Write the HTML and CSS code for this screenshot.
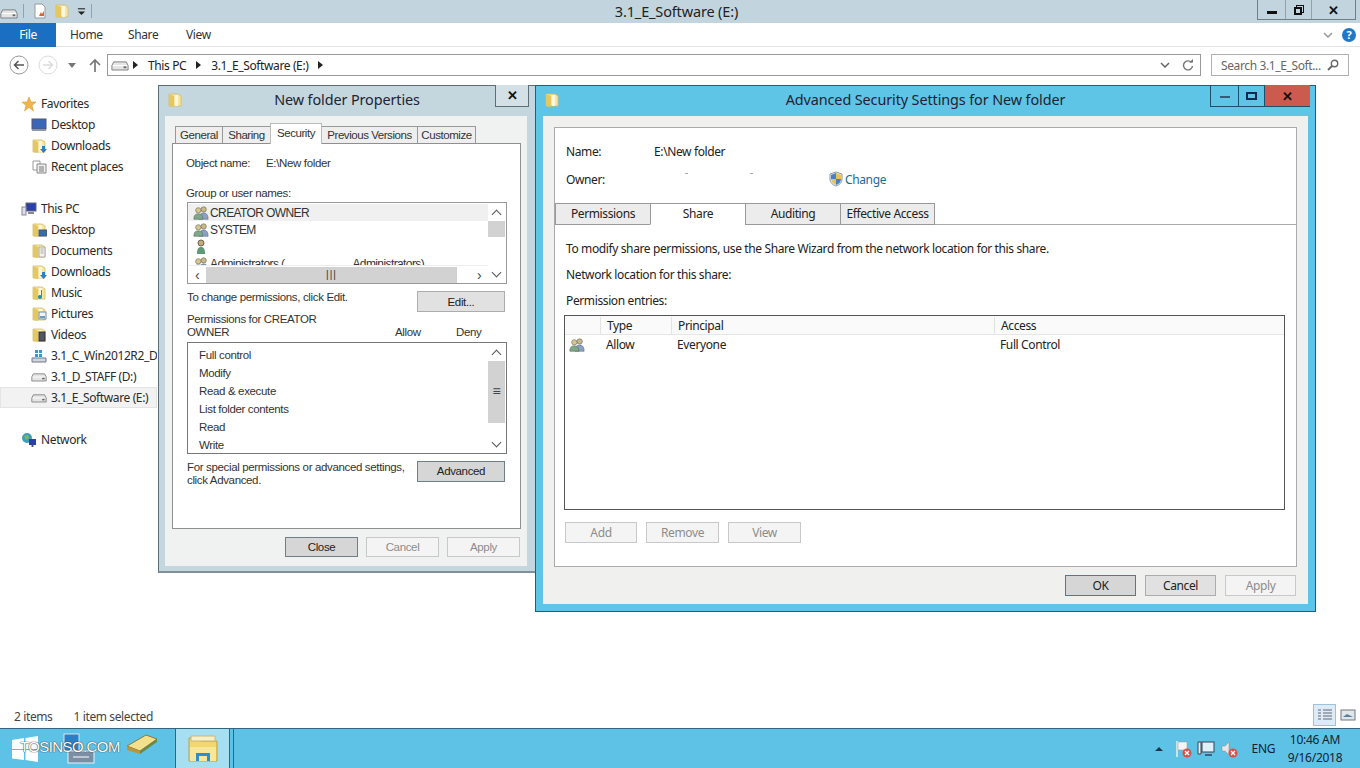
FILE: index.html
```html
<!DOCTYPE html>
<html lang="en">
<head>
  <meta charset="UTF-8" />
  <title>3.1_E_Software (E:)</title>
  <link rel="stylesheet" href="styles.css">
</head>
<body>
  <!-- shared icons -->
  <svg class="defs" width="0" height="0">
    <symbol id="tallfolder" viewBox="0 0 16 16">
      <path d="M2 2h9l3 2v10H2z" fill="#f6e6a0" stroke="#d2bb6a" stroke-width=".8"/>
      <path d="M2 2l5 2v11l-5-1z" fill="#e4c75e"/>
      <path d="M8 3h3v11H8z" fill="#fbf6dc"/>
    </symbol>
    <symbol id="drive" viewBox="0 0 20 12">
      <path d="M3 2h14l2 4v5H1V6z" fill="#e4e4e4" stroke="#777"/>
      <path d="M2 6h16" stroke="#fff"/>
      <rect x="14" y="7" width="3" height="2" fill="#666"/>
    </symbol>
    <symbol id="users" viewBox="0 0 18 16">
      <circle cx="12" cy="4" r="3" fill="#c9b88a" stroke="#6b6b55" stroke-width=".7"/>
      <path d="M7 15c0-5 2-7 5-7s5 2 5 7z" fill="#8aa0c4" stroke="#5f6f8c" stroke-width=".7"/>
      <circle cx="6" cy="5" r="3" fill="#d8c68e" stroke="#6b6b55" stroke-width=".7"/>
      <path d="M1 15c0-5 2-6 5-6s5 1 5 6z" fill="#7fa88a" stroke="#55705c" stroke-width=".7"/>
    </symbol>
    <symbol id="redx" viewBox="0 0 10 10">
      <circle cx="5" cy="5" r="4.500" fill="#d8504a"/>
      <path d="M3 3l4 4M7 3l-4 4" stroke="#fff" stroke-width="1.300"/>
    </symbol>
  </svg>

  <div class="explorer">
    <header class="titlebar">
      <div class="qat">
        <svg class="ico-drive-sm qat-drive"><use href="#drive"/></svg>
        <span class="qat-sep"></span>
        <svg class="ico-16" viewBox="0 0 16 16">
          <path d="M3 1h7l3 3v11H3z" fill="#fff" stroke="#999"/>
          <path d="M7 13l2-4 1 2 2-3v5z" fill="#d8653a"/>
        </svg>
        <svg class="ico-16"><use href="#tallfolder"/></svg>
        <svg class="ico-qat-menu" viewBox="0 0 10 10">
          <path d="M1 2h8" stroke="#222" stroke-width="1.200"/>
          <path d="M1 5h8L5 9z" fill="#222"/>
        </svg>
        <span class="qat-sep"></span>
      </div>
      <div class="title-text">3.1_E_Software (E:)</div>
      <div class="winbtns">
        <span class="winbtn min"><i class="glyph-min"></i></span>
        <span class="winbtn rest"><i class="glyph-rest"></i></span>
        <span class="winbtn close">✕</span>
      </div>
    </header>

    <nav class="ribbon">
      <span class="tab-file">File</span>
      <span class="rtab">Home</span>
      <span class="rtab">Share</span>
      <span class="rtab">View</span>
      <span class="ribbon-right">
        <svg class="ico-chev" viewBox="0 0 10 6"><path d="M1 1l4 4 4-4" fill="none" stroke="#999" stroke-width="1.500"/></svg>
        <span class="help">?</span>
      </span>
    </nav>

    <div class="addressrow">
      <span class="navbtn back"><svg viewBox="0 0 20 20"><circle cx="10" cy="10" r="9" fill="#fff" stroke="#999"/><path d="M15 10H6M9.500 6L5.500 10l4 4" fill="none" stroke="#555" stroke-width="1.500"/></svg></span>
      <span class="navbtn forward"><svg viewBox="0 0 20 20"><circle cx="10" cy="10" r="9" fill="#fff" stroke="#ddd"/><path d="M5 10h9M10.500 6l4 4-4 4" fill="none" stroke="#ddd" stroke-width="1.500"/></svg></span>
      <span class="navcaret"></span>
      <span class="navup"><svg viewBox="0 0 12 14"><path d="M6 14V2M1 7l5-5 5 5" fill="none" stroke="#777" stroke-width="1.700"/></svg></span>
      <div class="addressbar">
        <svg class="ico-drive-sm"><use href="#drive"/></svg>
        <span class="crumb-arrow first"></span><span>This PC</span>
        <span class="crumb-arrow"></span><span>3.1_E_Software (E:)</span>
        <span class="crumb-arrow"></span>
        <span class="address-end">
          <svg class="ico-chev" viewBox="0 0 10 6"><path d="M1 1l4 4 4-4" fill="none" stroke="#666" stroke-width="1.500"/></svg>
          <svg class="ico-refresh" viewBox="0 0 12 12"><path d="M9.500 3.500A4.500 4.500 0 1 0 10.500 7" fill="none" stroke="#777" stroke-width="1.400"/><path d="M7 3.500h4V0z" fill="#777"/></svg>
        </span>
      </div>
      <div class="searchbox">
        <span>Search 3.1_E_Soft...</span>
        <svg class="ico-search" viewBox="0 0 12 12"><circle cx="7.500" cy="4.500" r="3.200" fill="none" stroke="#666" stroke-width="1.400"/><path d="M5 7l-4 4" stroke="#666" stroke-width="1.800"/></svg>
      </div>
    </div>

    <div class="content">
      <aside class="sidebar">
        <ul class="tree">
          <li class="head"><svg class="ico-16" viewBox="0 0 16 16"><path d="M8 1l2 5h5l-4 3.500L12.500 15 8 11.500 3.500 15 5 9.500 1 6h5z" fill="#f0b54a" stroke="#d89a3a" stroke-width=".6"/></svg>Favorites</li>
          <li><svg class="ico-16" viewBox="0 0 16 16"><rect x="1" y="2" width="14" height="10" fill="#3a66b8" stroke="#557"/><path d="M1 12h14v2H1z" fill="#8d99a8"/></svg>Desktop</li>
          <li><svg class="ico-16" viewBox="0 0 16 16"><use href="#tallfolder" width="16" height="16"/><path d="M11 8h3v3h2l-3.500 4L9 11h2z" fill="#2b7fc8"/></svg>Downloads</li>
          <li><svg class="ico-16" viewBox="0 0 16 16"><path d="M2 2h7v9H2z" fill="#fff" stroke="#999"/><path d="M6 5h9v9H6z" fill="#eee" stroke="#888"/><path d="M8 8h5M8 10h5M8 12h5" stroke="#777"/></svg>Recent places</li>
          <li class="gap head"><svg class="ico-16" viewBox="0 0 16 16"><rect x="5" y="2" width="10" height="8" fill="#2b3fa8" stroke="#667"/><rect x="1" y="6" width="4" height="8" fill="#dde" stroke="#889"/><path d="M7 12h6" stroke="#889" stroke-width="2"/></svg>This PC</li>
          <li><svg class="ico-16" viewBox="0 0 16 16"><use href="#tallfolder" width="16" height="16"/><rect x="8" y="8" width="8" height="6" fill="#2f6fb0" stroke="#556"/></svg>Desktop</li>
          <li><svg class="ico-16" viewBox="0 0 16 16"><use href="#tallfolder" width="16" height="16"/><path d="M8 4h6v10H8z" fill="#f4f2ea" stroke="#aaa"/><path d="M9.500 6h3M9.500 8h3M9.500 10h3" stroke="#aaa"/></svg>Documents</li>
          <li><svg class="ico-16" viewBox="0 0 16 16"><use href="#tallfolder" width="16" height="16"/><path d="M11 8h3v3h2l-3.500 4L9 11h2z" fill="#2b7fc8"/></svg>Downloads</li>
          <li><svg class="ico-16" viewBox="0 0 16 16"><use href="#tallfolder" width="16" height="16"/><path d="M11 5v7a2 2 0 1 1-1-1.700V5z" fill="#2b8fa8"/></svg>Music</li>
          <li><svg class="ico-16" viewBox="0 0 16 16"><use href="#tallfolder" width="16" height="16"/><rect x="8" y="6" width="7" height="7" fill="#eef4f8" stroke="#789"/><path d="M9 11h5" stroke="#6a9ac0" stroke-width="2"/></svg>Pictures</li>
          <li><svg class="ico-16" viewBox="0 0 16 16"><use href="#tallfolder" width="16" height="16"/><rect x="8" y="5" width="6" height="9" fill="#556" stroke="#333"/></svg>Videos</li>
          <li><svg class="ico-16" viewBox="0 0 16 16"><path d="M4 2h3v3H4zM8 2h3v3H8zM4 6h3v3H4zM8 6h3v3H8z" fill="#2f9bd0"/><path d="M1 10h14v4H1z" fill="#cfd6dc" stroke="#778"/></svg>3.1_C_Win2012R2_DC</li>
          <li><svg class="ico-16"><use href="#drive"/></svg>3.1_D_STAFF (D:)</li>
          <li class="selected"><svg class="ico-16"><use href="#drive"/></svg>3.1_E_Software (E:)</li>
          <li class="gap head"><svg class="ico-16" viewBox="0 0 16 16"><circle cx="6" cy="6" r="5" fill="#3f9fb8"/><path d="M3 4l4-1 1 3-3 2z" fill="#7fb85a"/><rect x="8" y="7" width="7" height="6" fill="#2b3fa8"/><path d="M11.500 13v2" stroke="#556" stroke-width="2"/></svg>Network</li>
        </ul>
      </aside>
    </div>

    <footer class="statusbar">
      <span class="status-a">2 items</span>
      <span>1 item selected</span>
      <span class="views">
        <span class="view on"><svg viewBox="0 0 16 14"><path d="M1 2h3M6 2h9M1 5h3M6 5h9M1 8h3M6 8h9M1 11h3M6 11h9" stroke="#667"/></svg></span>
        <span class="view"><svg viewBox="0 0 16 14"><rect x="1" y="2" width="14" height="10" fill="#dfe6ec" stroke="#777"/><path d="M3 9l4-3 6 3z" fill="#5f7f96"/></svg></span>
      </span>
    </footer>
  </div>

  <!-- properties dialog -->
  <section class="dlg props">
    <div class="dlg-title">
      <svg class="ico-16"><use href="#tallfolder"/></svg>
      <span class="dlg-title-text">New folder Properties</span>
      <span class="props-close">✕</span>
    </div>
    <div class="props-body">
      <div class="props-tabs">
        <span class="ptab">General</span>
        <span class="ptab">Sharing</span>
        <span class="ptab on">Security</span>
        <span class="ptab">Previous Versions</span>
        <span class="ptab">Customize</span>
      </div>
      <div class="props-panel">
        <div class="objname"><span class="objlabel">Object name:</span><span>E:\New folder</span></div>
        <div class="grouplabel">Group or user names:</div>
        <div class="listbox groups">
          <div class="listrows">
            <div class="urow hl"><svg class="ico-16"><use href="#users"/></svg>CREATOR OWNER</div>
            <div class="urow"><svg class="ico-16"><use href="#users"/></svg>SYSTEM</div>
            <div class="urow"><svg class="ico-16" viewBox="0 0 16 16"><circle cx="8" cy="4" r="3" fill="#c9a878" stroke="#665"/><path d="M4 15c0-5 1-7 4-7s4 2 4 7z" fill="#5f9a78"/></svg></div>
            <div class="urow"><svg class="ico-16"><use href="#users"/></svg>Administrators (<span class="blank"></span>Administrators)</div>
            <div class="hscroll">
              <span class="sb-arrow">‹</span>
              <span class="hthumb">|||</span>
              <span class="sb-arrow">›</span>
            </div>
          </div>
          <div class="vscroll">
            <span class="sb-arrow up"></span>
            <span class="vthumb small"></span>
            <span class="vspace"></span>
            <span class="sb-arrow down"></span>
          </div>
        </div>
        <div class="editrow">
          <span>To change permissions, click Edit.</span>
          <span class="btn edit">Edit...</span>
        </div>
        <div class="permhead">
          <span class="permfor">Permissions for CREATOR<br>OWNER</span>
          <span class="allow">Allow</span>
          <span class="deny">Deny</span>
        </div>
        <div class="listbox perms">
          <div class="permrows">
            <div>Full control</div>
            <div>Modify</div>
            <div>Read &amp; execute</div>
            <div>List folder contents</div>
            <div>Read</div>
            <div>Write</div>
          </div>
          <div class="vscroll">
            <span class="sb-arrow up"></span>
            <span class="vthumb big">≡</span>
            <span class="vspace"></span>
            <span class="sb-arrow down"></span>
          </div>
        </div>
        <div class="advrow">
          <span>For special permissions or advanced settings,<br>click Advanced.</span>
          <span class="btn edit focus">Advanced</span>
        </div>
      </div>
      <div class="props-foot">
        <span class="btn pbtn focus">Close</span>
        <span class="btn pbtn off">Cancel</span>
        <span class="btn pbtn off">Apply</span>
      </div>
    </div>
  </section>

  <!-- advanced security dialog -->
  <section class="dlg adv">
    <div class="dlg-title">
      <svg class="ico-16"><use href="#tallfolder"/></svg>
      <span class="dlg-title-text">Advanced Security Settings for New folder</span>
      <div class="adv-ctrls">
        <span class="ctrl c-min"><i class="adv-min"></i></span>
        <span class="ctrl c-max"><i class="adv-max"></i></span>
        <span class="ctrl red">✕</span>
      </div>
    </div>
    <div class="adv-body">
      <div class="adv-panel">
        <div class="kv"><span class="k">Name:</span><span>E:\New folder</span></div>
        <div class="kv owner">
          <span class="k">Owner:</span>
          <span class="owner-blank"></span>
          <svg class="ico-shield" viewBox="0 0 16 16"><path d="M8 1l6 2v5c0 4-3 6-6 7-3-1-6-3-6-7V3z" fill="#e8eef2" stroke="#8a9aa8"/><path d="M8 2v6H3V4zM8 8h5c0 3-2 5-5 6z" fill="#4a7fc0"/><path d="M8 2l5 2v4H8zM8 8v6c-2-1-5-3-5-6z" fill="#e8c550"/></svg>
          <span class="link">Change</span>
        </div>
        <div class="adv-tabs">
          <span class="atab">Permissions</span>
          <span class="atab on">Share</span>
          <span class="atab">Auditing</span>
          <span class="atab">Effective Access</span>
        </div>
        <div class="adv-tabbody">
          <p class="para first">To modify share permissions, use the Share Wizard from the network location for this share.</p>
          <p class="para">Network location for this share:</p>
          <p class="para">Permission entries:</p>
          <div class="entries">
            <div class="entries-head">
              <span class="c-icon"></span>
              <span class="c-type">Type</span>
              <span class="c-principal">Principal</span>
              <span class="c-access">Access</span>
            </div>
            <div class="entries-row">
              <span class="c-icon"><svg class="ico-16"><use href="#users"/></svg></span>
              <span class="c-type">Allow</span>
              <span class="c-principal">Everyone</span>
              <span class="c-access">Full Control</span>
            </div>
          </div>
          <div class="entry-btns">
            <span class="btn abtn off">Add</span>
            <span class="btn abtn off">Remove</span>
            <span class="btn abtn off">View</span>
          </div>
        </div>
      </div>
      <div class="adv-foot">
        <span class="btn fbtn focus">OK</span>
        <span class="btn fbtn">Cancel</span>
        <span class="btn fbtn off">Apply</span>
      </div>
    </div>
  </section>

  <!-- taskbar -->
  <div class="taskbar">
    <svg class="winlogo" viewBox="0 0 26 26"><path d="M0 4l12-2v11H0zM13.500 2L26 0v13H13.500zM0 14h12v10L0 22.500zM13.500 14H26v12l-12.500-2z" fill="#fff"/></svg>
    <svg class="ql-server" viewBox="0 0 32 32"><rect x="1" y="1" width="15" height="17" fill="#2d7fc4" stroke="#cfe6f4"/><rect x="5" y="18" width="26" height="12" fill="#7a8fa4" stroke="#e8f2f8"/><path d="M10 24h16" stroke="#fff"/></svg>
    <svg class="ql-book" viewBox="0 0 32 22"><path d="M1 13L20 2l11 4-17 12z" fill="#f2e08c" stroke="#8a7a3a"/><path d="M1 13l13 5v3L1 17z" fill="#b8973a"/><path d="M14 18l17-12v3L14 21z" fill="#6a8a4a"/></svg>
    <span class="watermark">TOSINSO.COM</span>
    <span class="tb-app">
      <svg class="ico-explorer" viewBox="0 0 32 32">
        <path d="M2 5h10l2 3h16v20H2z" fill="#f2d76e" stroke="#b9a04a"/>
        <path d="M4 3h24v5H4z" fill="#f7efc8" stroke="#c9b878"/>
        <path d="M3 14h26v14H3z" fill="#f8e79a"/>
        <path d="M9 28v-8h14v8h-3v-5h-8v5z" fill="#2f8fc4"/>
      </svg>
    </span>
    <span class="tb-sliver"></span>
    <div class="tray">
      <span class="tray-up"></span>
      <span class="tray-ico"><svg viewBox="0 0 18 18"><path d="M3 1v16" stroke="#eee" stroke-width="1.500"/><path d="M4 2h9v8H4z" fill="#f4f4f4" stroke="#999" stroke-width=".5"/><use href="#redx" x="8" y="8" width="10" height="10"/></svg></span>
      <span class="tray-ico"><svg viewBox="0 0 18 18"><rect x="5" y="2" width="12" height="10" fill="#dff0f8" stroke="#345"/><path d="M1 2h3v12H1z" fill="#dff0f8" stroke="#345"/><path d="M8 15h7" stroke="#345" stroke-width="1.500"/></svg></span>
      <span class="tray-ico"><svg viewBox="0 0 18 18"><path d="M2 6h3l4-4v13l-4-4H2z" fill="#e6e6e6" stroke="#888" stroke-width=".5"/><use href="#redx" x="8" y="8" width="10" height="10"/></svg></span>
      <span class="tray-lang">ENG</span>
      <span class="clock">10:46 AM<br>9/16/2018</span>
    </div>
  </div>
</body>
</html>
```

FILE: styles.css
```css
* {box-sizing: border-box;}
html, body {margin: 0; padding: 0;}
body {width: 1360px; height: 768px; overflow: hidden; position: relative; background: #fff; color: #222; font-family: "Noto Sans", sans-serif; font-size: 12px; letter-spacing: -.38px;}
svg {display: block; flex: none;}
.defs {position: absolute;}
.ico-16 {width: 16px; height: 16px;}
.ico-drive-sm {width: 18px; height: 11px;}

.explorer {height: 728px; display: flex; flex-direction: column;}

/* title bar */
.titlebar {height: 23px; background: #c2d5de; display: flex; position: relative;}
.qat {display: flex; align-items: center; height: 22px; width: 200px;}
.qat-drive {margin-top: 5px;}
.qat-sep {width: 1px; height: 14px; background: #8fa3ad; margin: 0 8px 0 5px;}
.qat .ico-16 + .ico-16 {margin-left: 6px;}
.ico-qat-menu {width: 9px; height: 9px; margin-left: 7px;}
.title-text {flex: 1; text-align: center; font-size: 14.500px; line-height: 23px; padding-right: 104px; letter-spacing: -.15px;}
.winbtns {display: flex; height: 20px; margin-right: 4px; border-left: 1px solid #6f8088; border-bottom: 1px solid #6f8088;}
.winbtn {display: flex; align-items: center; justify-content: center; border-right: 1px solid #8fa3ad; height: 19px;}
.winbtn.min {width: 28px;}
.winbtn.rest {width: 26px;}
.winbtn.close {width: 44px; font-size: 13px; font-weight: bold; color: #111; border-right: 1px solid #6f8088;}
.glyph-min {width: 10px; height: 3px; background: #111; margin-top: 5px;}
.glyph-rest {width: 8px; height: 8px; border: 2px solid #111; box-shadow: 2px -2px 0 -1px #c2d5de, 2px -2px 0 0 #111; margin: 2px 2px 0 0;}

/* ribbon */
.ribbon {height: 24px; display: flex; align-items: center; border-bottom: 1px solid #e4e4e4;}
.tab-file {width: 56px; height: 24px; background: #1b6fc2; color: #fff; text-align: center; line-height: 23px;}
.rtab {margin-left: 14px; width: 44px; color: #333;}
.ribbon-right {margin-left: auto; display: flex; align-items: center; gap: 9px; padding-right: 4px;}
.ico-chev {width: 10px; height: 6px;}
.help {width: 14px; height: 14px; border-radius: 50%; background: #2277c8; color: #fff; font-weight: bold; font-size: 11px; line-height: 14px; text-align: center;}

/* address row */
.addressrow {height: 37px; display: flex; align-items: center; position: relative; padding-left: 9px; padding-bottom: 1px;}
.navbtn {width: 20px; height: 20px;}
.navbtn.forward {margin-left: 9px;}
.navcaret {width: 0; height: 0; border: 4px solid transparent; border-top: 5px solid #777; border-bottom: 0; margin-left: 10px;}
.navup {width: 12px; height: 14px; margin-left: 13px;}
.addressbar {width: 1094px; height: 22px; margin-left: 6px; border: 1px solid #9a9a9a; display: flex; align-items: center; padding-left: 3px;}
.crumb-arrow {width: 0; height: 0; border: 4px solid transparent; border-left: 5px solid #222; border-right: 0; margin: 0 10px 0 10px;}
.crumb-arrow.first {margin-left: 4px;}
.address-end {margin-left: auto; display: flex; align-items: center; gap: 12px; padding-right: 6px;}
.ico-refresh {width: 12px; height: 12px;}
.searchbox {width: 138px; height: 22px; margin-left: 10px; border: 1px solid #b0b0b0; display: flex; align-items: center; justify-content: space-between; padding: 0 9px; color: #666;}
.ico-search {width: 12px; height: 12px;}

/* sidebar */
.content {flex: 1; display: flex; min-height: 0;}
.sidebar {width: 157px; overflow: hidden;}
.tree {list-style: none; margin: 9px 0 0; padding: 0;}
.tree li {height: 21px; display: flex; align-items: center; gap: 4px; padding-left: 30px; white-space: nowrap; border: 1px solid transparent; color: #2a2a2a;}
.tree li.head {padding-left: 20px;}
.tree li.gap {margin-top: 21px;}
.tree li.selected {background: #f2f2f2; border-color: #e4e4e4;}

/* status bar */
.statusbar {height: 24px; display: flex; align-items: center; padding-left: 14px; color: #444;}
.status-a {margin-right: 21px;}
.views {margin-left: auto; display: flex; margin-right: 1px; align-self: flex-start;}
.view {width: 23px; height: 22px; display: flex; align-items: center; justify-content: center;}
.view.on {background: #dcebf5; border: 1px solid #9cc3dc;}
.view svg {width: 16px; height: 14px;}

/* dialogs */
.dlg {position: absolute; top: 85px; display: flex; flex-direction: column;}
.dlg-title {height: 30px; display: flex; align-items: center; position: relative; padding: 0 0 2px 8px; flex: none;}
.dlg-title-text {position: absolute; left: 0; right: 0; top: 4px; text-align: center; font-family: "Noto Sans", sans-serif; font-size: 14.400px; letter-spacing: -.1px; color: #223;}

.props {left: 158px; width: 377px; height: 488px; background: #c4d6de; border: 1px solid #5e6e76; border-right: 0; border-bottom: 2px solid #7f9099; font-family: "Liberation Sans", sans-serif; font-size: 11.500px; letter-spacing: -.35px;}
.props-close {position: absolute; right: 6px; top: -1px; width: 34px; height: 22px; background: #d3e0e6; border: 1px solid #5e6e76; border-top: 0; font-weight: bold; font-size: 13px; line-height: 21px; text-align: center; color: #111;}
.props-body {width: 362px; margin-left: 6px; height: 450px; background: #eff2f1;}
.props-tabs {display: flex; align-items: flex-end; height: 27px; padding-left: 10px; letter-spacing: -.45px;}
.ptab {height: 17px; line-height: 16px; text-align: center; border: 1px solid #999; border-bottom: 0; background: #eee; margin-right: -1px; color: #333;}
.ptab:nth-child(1) {width: 48px;}
.ptab:nth-child(2) {width: 49px;}
.ptab:nth-child(4) {width: 97px;}
.ptab:nth-child(5) {width: 59px;}
.ptab.on {width: 52px; height: 21px; background: #fff; position: relative; margin-bottom: -1px; z-index: 1; line-height: 18px; border-color: #bbb;}
.props-panel {width: 349px; margin-left: 7px; height: 386px; background: #fff; border: 1px solid #8f8f8f; padding: 12px 13px 0 13px; color: #333;}
.objname {display: flex; height: 14px; line-height: 14px;}
.objlabel {width: 80px;}
.grouplabel {margin-top: 16px; line-height: 14px; height: 14px;}
.listbox {display: flex; width: 320px; margin-left: 1px; border: 1px solid #777; background: #fff;}
.groups {height: 82px; margin-top: 2px; border-color: #999; font-size: 12px; letter-spacing: -.6px;}
.listrows {flex: 1; min-width: 0; position: relative; overflow: hidden; padding: 1px 0 0 5px;}
.urow {height: 17px; display: flex; align-items: center; gap: 1px; white-space: nowrap;}
.urow.hl {background: #f0f0f0; margin-left: -5px; padding-left: 5px;}
.blank {width: 66px;}
.hscroll {position: absolute; left: 0; right: 0; bottom: 0; height: 18px; background: #fff; display: flex; align-items: center; border-top: 1px solid #eee;}
.hscroll .sb-arrow {width: 18px; text-align: center; font-size: 14px; line-height: 16px; color: #444;}
.hthumb {width: 251px; height: 16px; background: #d2d2d2; text-align: center; line-height: 15px; font-size: 10px; letter-spacing: 1px; color: #333;}
.hscroll .sb-arrow:last-child {margin-left: auto;}
.vscroll {width: 17px; display: flex; flex-direction: column; margin: 1px 1px 1px 0;}
.vscroll .sb-arrow {height: 17px; display: flex; align-items: center; justify-content: center;}
.sb-arrow.up::before, .sb-arrow.down::before {content: ""; width: 6px; height: 6px; border-left: 1px solid #555; border-top: 1px solid #555;}
.sb-arrow.up::before {transform: rotate(45deg); margin-top: 3px;}
.sb-arrow.down::before {transform: rotate(225deg); margin-bottom: 3px;}
.vthumb {background: #d2d2d2; text-align: center; color: #444;}
.vthumb.small {height: 16px;}
.vthumb.big {height: 62px; line-height: 60px; font-size: 14px;}
.vspace {flex: 1;}
.editrow {display: flex; justify-content: space-between; margin-top: 7px; height: 21px; padding-left: 1px;}
.btn {display: flex; align-items: center; justify-content: center; border: 1px solid #acacac; background: #e1e1e1; color: #222;}
.btn.off {background: #f4f4f4; color: #8c8c8c; border-color: #c8c8c8;}
.btn.focus {background: #d6d6d6; border-color: #6f7f88;}
.btn.edit {width: 88px; height: 21px; margin-right: 2px;}
.permhead {display: flex; margin-top: 1px; height: 29px; line-height: 13px; padding-left: 1px;}
.permfor {width: 208px;}
.allow {width: 61px; padding-top: 13px;}
.deny {padding-top: 13px;}
.perms {height: 112px;}
.permrows {flex: 1; padding: 3px 0 0 11px;}
.permrows div {height: 18px; line-height: 18px;}
.advrow {display: flex; justify-content: space-between; margin-top: 7px; line-height: 13px; padding-left: 1px;}
.props-foot {display: flex; justify-content: flex-end; gap: 8px; padding: 8px 7px 0 0;}
.pbtn {width: 73px; height: 20px;}

.adv {left: 535px; width: 781px; height: 527px; background: #5ec5e6; border: 1px solid #1f5f78;}
.adv-ctrls {position: absolute; top: -1px; right: 5px; display: flex; height: 22px; border-bottom: 1px solid #1f4f68;}
.ctrl {display: flex; align-items: center; justify-content: center; border-left: 1px solid #1f4f68;}
.c-min {width: 28px;}
.c-max {width: 26px;}
.ctrl.red {width: 46px; background: #cc5a4e; font-weight: bold; font-size: 13px; color: #111;}
.adv-min {width: 10px; height: 2px; background: #335b78; margin-top: 3px;}
.adv-max {width: 11px; height: 8px; border: 2px solid #102a50;}
.adv-body {margin: 0 7px 7px; flex: 1; background: #f0f1ef; padding: 11px 11px 0; display: flex; flex-direction: column;}
.adv-panel {height: 440px; background: #fff; border: 1px solid #aaa; display: flex; flex-direction: column; flex: none;}
.kv {display: flex; align-items: center; height: 16px; margin: 15px 0 0 11px;}
.kv.owner {margin-top: 12px;}
.k {width: 88px;}
.owner-blank {width: 174px; align-self: stretch; background: linear-gradient(#aaa, #aaa) 31px 2px / 3px 1px no-repeat, linear-gradient(#aaa, #aaa) 96px 2px / 3px 1px no-repeat;}
.ico-shield {width: 16px; height: 16px; margin-right: 1px;}
.link {color: #1b6a9c;}
.adv-tabs {display: flex; margin-top: 16px; height: 21px; position: relative; z-index: 1;}
.atab {width: 95px; height: 22px; border: 1px solid #999; border-right: 0; background: #ececec; text-align: center; line-height: 20px;}
.atab:last-child {border-right: 1px solid #999;}
.atab.on {background: #fff; border-bottom-color: #fff;}
.adv-tabbody {flex: 1; border-top: 1px solid #aaa; padding: 0 11px 0 9px;}
.para {margin: 0 0 0 2px; height: 26px; line-height: 26px;}
.para.first {margin-top: 11px;}
.entries {height: 195px; border: 1px solid #555; margin-top: 1px;}
.entries-head, .entries-row {display: flex;}
.entries-head {height: 19px; line-height: 18px; padding-top: 1px; border-bottom: 1px solid #e6e6e6; background: #fafafa;}
.c-icon {width: 35px;}
.c-type {width: 71px; padding-left: 6px;}
.c-principal {width: 323px; padding-left: 6px;}
.c-access {padding-left: 6px; flex: 1;}
.entries-head span + span {border-left: 1px solid #e2e2e2;}
.entries-row {height: 19px; align-items: center;}
.entries-row .c-icon {padding-left: 4px;}
.entry-btns {display: flex; gap: 9px; margin: 12px 0 0 1px;}
.abtn {width: 73px; height: 21px;}
.abtn:first-child {width: 72px;}
.adv-foot {display: flex; justify-content: flex-end; gap: 9px; padding: 8px 1px 0 0;}
.fbtn {width: 71px; height: 21px;}
.adv-foot .fbtn.focus {border-color: #4f7a92;}

/* taskbar */
.taskbar {position: absolute; left: 0; right: 0; bottom: 0; height: 40px; background: #5ec2e6; border-top: 1px solid #33657d; display: flex; align-items: center;}
.winlogo {width: 26px; height: 26px; margin-left: 12px;}
.ql-server {width: 32px; height: 32px; margin-left: 25px;}
.ql-book {width: 32px; height: 22px; margin-left: 31px; margin-top: -10px;}
.watermark {position: absolute; left: 20px; top: 9px; color: #fff; font-family: "Liberation Sans", sans-serif; font-size: 15px; letter-spacing: -.6px; text-shadow: 0 0 1px #333, 0 0 1px #333;}
.tb-app {width: 55px; height: 39px; margin-left: 17px; background: #a7dff2; border-left: 1px solid #33657d; border-right: 1px solid #33657d; display: flex; align-items: center; justify-content: center;}
.ico-explorer {width: 32px; height: 32px;}
.tb-sliver {width: 4px; height: 39px; border-right: 1px solid #33657d;}
.tray {margin-left: auto; display: flex; align-items: center; height: 39px; padding-right: 17px;}
.tray-up {width: 0; height: 0; border: 4px solid transparent; border-bottom: 4px solid #17384a; border-top: 0; margin-right: 11px;}
.tray-ico {width: 18px; height: 18px; margin-right: 5px;}
.tray-lang {margin: 0 12px 0 9px; color: #123;}
.clock {text-align: center; line-height: 18px; font-size: 12px; color: #123; width: 56px; letter-spacing: -.25px;}
```
